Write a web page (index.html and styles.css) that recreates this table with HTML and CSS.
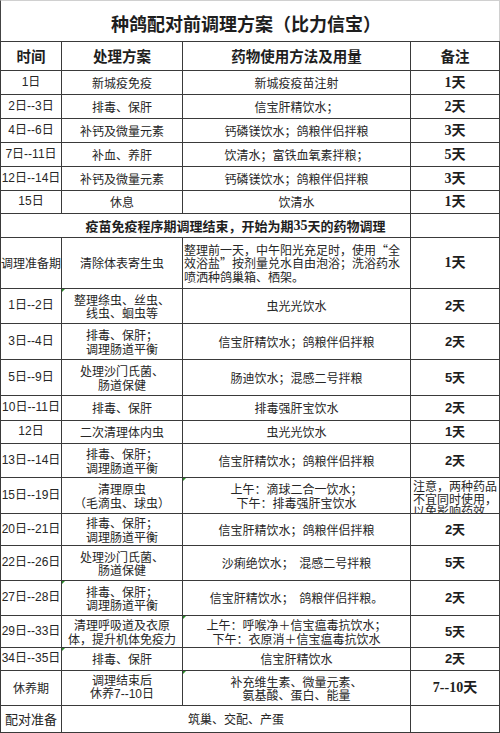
FILE: index.html
```html
<!DOCTYPE html>
<html lang="zh-CN">
<head>
<meta charset="utf-8">
<title>种鸽配对前调理方案</title>
<link rel="stylesheet" href="styles.css">
</head>
<body>
<div class="page">
  <div class="title">种鸽配对前调理方案（比力信宝）</div>
  <div class="sheet">
    <div class="c h">时间</div>
    <div class="c h">处理方案</div>
    <div class="c h">药物使用方法及用量</div>
    <div class="c h">备注</div>

    <div class="c d">1日</div>
    <div class="c">新城疫免疫</div>
    <div class="c">新城疫疫苗注射</div>
    <div class="c n">1天</div>

    <div class="c d">2日--3日</div>
    <div class="c">排毒、保肝</div>
    <div class="c">信宝肝精饮水；</div>
    <div class="c n">2天</div>

    <div class="c d">4日--6日</div>
    <div class="c">补钙及微量元素</div>
    <div class="c">钙磷镁饮水；鸽粮伴侣拌粮</div>
    <div class="c n">3天</div>

    <div class="c d">7日--11日</div>
    <div class="c">补血、养肝</div>
    <div class="c">饮清水；富铁血氧素拌粮；</div>
    <div class="c n">5天</div>

    <div class="c d">12日--14日</div>
    <div class="c">补钙及微量元素</div>
    <div class="c">钙磷镁饮水；鸽粮伴侣拌粮</div>
    <div class="c n">3天</div>

    <div class="c d">15日</div>
    <div class="c">休息</div>
    <div class="c">饮清水</div>
    <div class="c n">1天</div>

    <div class="c section">疫苗免疫程序期调理结束，开始为期<span class="num">35</span>天的药物调理</div>
    <div class="c"></div>

    <div class="c">调理准备期</div>
    <div class="c">清除体表寄生虫</div>
    <div class="c left"><p class="t">整理前一天，中午阳光充足时，使用“全<br>效浴盐”按剂量兑水自由泡浴；洗浴药水<br>喷洒种鸽巢箱、栖架。</p></div>
    <div class="c n">1天</div>

    <div class="c d">1日--2日</div>
    <div class="c flag"><p class="t">整理绦虫、丝虫、<br>线虫、蛔虫等</p></div>
    <div class="c">虫光光饮水</div>
    <div class="c ns">2天</div>

    <div class="c d">3日--4日</div>
    <div class="c"><p class="t">排毒、保肝；<br>调理肠道平衡</p></div>
    <div class="c">信宝肝精饮水；鸽粮伴侣拌粮</div>
    <div class="c ns">2天</div>

    <div class="c d">5日--9日</div>
    <div class="c"><p class="t">处理沙门氏菌、<br>肠道保健</p></div>
    <div class="c">肠迪饮水；混感二号拌粮</div>
    <div class="c ns">5天</div>

    <div class="c d">10日--11日</div>
    <div class="c">排毒、保肝</div>
    <div class="c">排毒强肝宝饮水</div>
    <div class="c ns">2天</div>

    <div class="c d">12日</div>
    <div class="c">二次清理体内虫</div>
    <div class="c">虫光光饮水</div>
    <div class="c ns">1天</div>

    <div class="c d">13日--14日</div>
    <div class="c"><p class="t">排毒、保肝；<br>调理肠道平衡</p></div>
    <div class="c">信宝肝精饮水；鸽粮伴侣拌粮</div>
    <div class="c ns">2天</div>

    <div class="c d">15日--19日</div>
    <div class="c"><p class="t">清理原虫<br>（毛滴虫、球虫）</p></div>
    <div class="c flag"><p class="t">上午：滴球二合一饮水；<br>下午：排毒强肝宝饮水</p></div>
    <div class="c note"><p class="t">注意，两种药品<br>不宜同时使用，<br>以免影响药效</p></div>

    <div class="c d">20日--21日</div>
    <div class="c"><p class="t">排毒、保肝；<br>调理肠道平衡</p></div>
    <div class="c">信宝肝精饮水；鸽粮伴侣拌粮</div>
    <div class="c ns">2天</div>

    <div class="c d">22日--26日</div>
    <div class="c"><p class="t">处理沙门氏菌、<br>肠道保健</p></div>
    <div class="c pre">沙痢绝饮水；  混感二号拌粮</div>
    <div class="c ns">5天</div>

    <div class="c d">27日--28日</div>
    <div class="c flag"><p class="t">排毒、保肝；<br>调理肠道平衡</p></div>
    <div class="c pre">信宝肝精饮水；  鸽粮伴侣拌粮。</div>
    <div class="c ns">2天</div>

    <div class="c d">29日--33日</div>
    <div class="c"><p class="t">清理呼吸道及衣原<br>体，提升机体免疫力</p></div>
    <div class="c flag"><p class="t">上午：呼喉净＋信宝瘟毒抗饮水；<br>下午：衣原消＋信宝瘟毒抗饮水</p></div>
    <div class="c ns">5天</div>

    <div class="c d">34日--35日</div>
    <div class="c flag">排毒、保肝</div>
    <div class="c">信宝肝精饮水</div>
    <div class="c ns">2天</div>

    <div class="c">休养期</div>
    <div class="c d"><p class="t">调理结束后<br>休养7--10日</p></div>
    <div class="c flag"><p class="t">补充维生素、微量元素、<br>氨基酸、蛋白、能量</p></div>
    <div class="c n">7--10天</div>

    <div class="c big">配对准备</div>
    <div class="c span2">筑巢、交配、产蛋</div>
    <div class="c"></div>
  </div>
</div>
</body>
</html>
```

FILE: styles.css
```css
* {
  box-sizing: border-box;
}

body {
  margin: 0;
  background: #ffffff;
  font-family: "Noto Sans CJK SC", sans-serif;
  color: #262626;
}

.page {
  width: 500px;
}

.title {
  height: 41px;
  border-top: 1px solid #d0d0d0;
  border-right: 1px solid #d0d0d0;
  border-left: 1px solid #444444;
  display: flex;
  align-items: center;
  justify-content: center;
  padding: 4px 8px 0 0;
  font-size: 18px;
  font-weight: bold;
  color: #1e1e1e;
}

.sheet {
  display: grid;
  grid-template-columns: 60px 120px 227px 88px;
  grid-template-rows: 28px 23px 23px 23px 23px 23px 22px 23px 50px 34px 35px 35px 24px 22px 33px 35px 31px 34px 34px 31px 22px 34px 26px;
  gap: 1px;
  padding: 1px;
  background: #3a3a3a;
}

.c {
  background: #ffffff;
  display: flex;
  align-items: center;
  justify-content: center;
  text-align: center;
  font-size: 12px;
  line-height: 13.5px;
  white-space: nowrap;
  overflow: hidden;
  position: relative;
}

.t {
  margin: 0;
}

.h {
  font-size: 14.5px;
  font-weight: bold;
  color: #1e1e1e;
}

.d {
  font-family: "Liberation Sans", "Noto Sans CJK SC", sans-serif;
}

.n {
  font-family: "Liberation Serif", "Noto Sans CJK SC", serif;
  font-size: 14px;
  font-weight: bold;
  color: #1e1e1e;
}

.ns {
  font-family: "Liberation Sans", "Noto Sans CJK SC", sans-serif;
  font-size: 13px;
  font-weight: bold;
  color: #1e1e1e;
}

.section {
  grid-column: 1 / span 3;
  padding-left: 60px;
  font-size: 13px;
  font-weight: bold;
  color: #1e1e1e;
}

.num {
  font-family: "Liberation Serif", serif;
  font-size: 14px;
}

.left {
  justify-content: flex-start;
  text-align: left;
  padding-left: 1px;
}

.note {
  align-items: flex-start;
  justify-content: flex-start;
  text-align: left;
  padding: 2px 0 0 2px;
  line-height: 12.5px;
}

.pre {
  white-space: pre;
}

.big {
  font-size: 13px;
}

.span2 {
  grid-column: 2 / span 2;
}

.flag::before {
  content: "";
  position: absolute;
  left: 0;
  top: 0;
  border-top: 3px solid #2a8a2a;
  border-right: 3px solid transparent;
}
```
